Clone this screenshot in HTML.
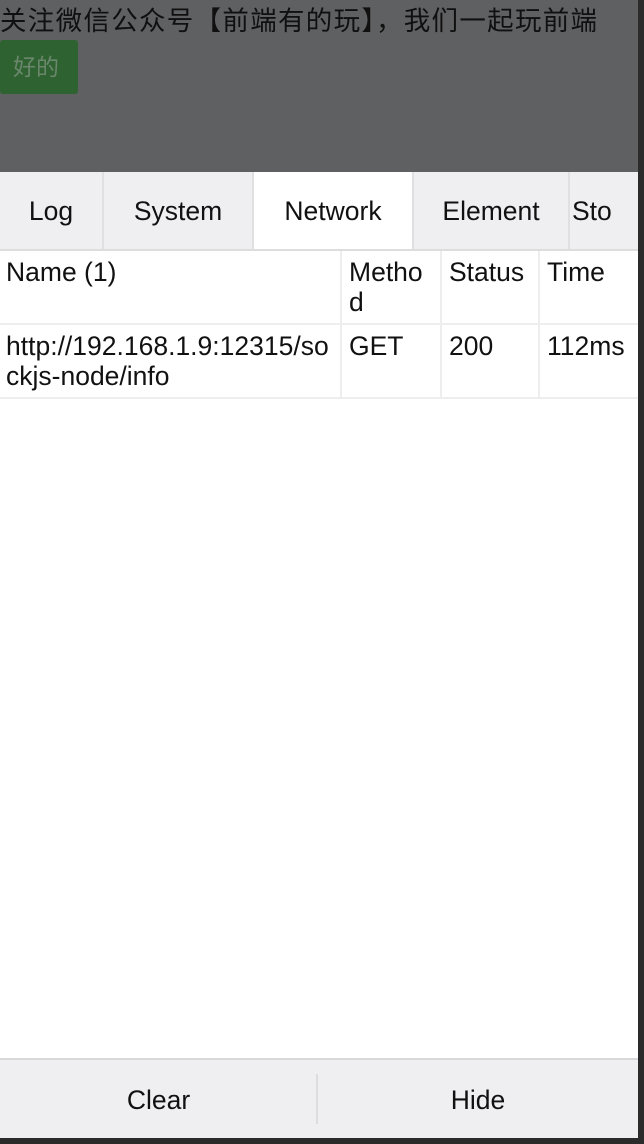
<!DOCTYPE html>
<html><head><meta charset="utf-8"><style>
*{margin:0;padding:0;box-sizing:border-box}
body{width:644px;height:1144px;background:#2b2b2b;position:relative;overflow:hidden;font-family:"Liberation Sans","Noto Sans CJK SC",sans-serif}
.top{position:absolute;left:0;top:0;width:638px;height:172px;background:#5f6062}
.msg{position:absolute;left:0;top:4px;font-size:26.5px;color:#101010;white-space:nowrap;line-height:34px;letter-spacing:1.3px}
.btn{position:absolute;left:0;top:40px;width:78px;height:54px;background:#2e6231;border-radius:3px;color:#6a876b;font-size:23px;line-height:54px;padding-left:13px}
.panel{position:absolute;left:0;top:172px;width:638px;height:966px;background:#fff}
.tabs{position:absolute;left:0;top:0;width:638px;height:79px;background:#efeff2;border-bottom:2px solid #ddd;overflow:hidden}
.tab{position:absolute;top:0;height:77px;line-height:78px;text-align:center;font-size:26.5px;color:#111;border-right:2px solid #e0e0e2;white-space:nowrap}
.tab.on{background:#fff}
.cell{position:absolute;font-size:26.5px;color:#111;line-height:30px;padding:6px 7px;border-right:2px solid #eee;border-bottom:2px solid #eee;white-space:nowrap}
.bar{position:absolute;left:0;top:886px;width:638px;height:80px;background:#efeff2;border-top:2px solid #d8d8da}
.bar div{position:absolute;top:0;height:78px;line-height:80px;text-align:center;font-size:26.5px;color:#111}
</style></head><body>
<div class="top"><div class="msg">关注微信公众号【前端有的玩】，我们一起玩前端</div><div class="btn">好的</div></div>
<div class="panel">
<div class="tabs">
<div class="tab" style="left:0;width:104px">Log</div>
<div class="tab" style="left:104px;width:150px">System</div>
<div class="tab on" style="left:254px;width:160px">Network</div>
<div class="tab" style="left:414px;width:156px">Element</div>
<div class="tab" style="left:570px;width:100px;text-align:left;padding-left:2px">Sto</div>
</div>
<div class="cell" style="left:0;top:79px;width:342px;height:74px;padding-left:6px">Name (1)</div>
<div class="cell" style="left:342px;top:79px;width:100px;height:74px">Metho<br>d</div>
<div class="cell" style="left:442px;top:79px;width:98px;height:74px">Status</div>
<div class="cell" style="left:540px;top:79px;width:98px;height:74px;border-right:none">Time</div>
<div class="cell" style="left:0;top:153px;width:342px;height:74px;padding-left:6px">http://192.168.1.9:12315/so<br>ckjs-node/info</div>
<div class="cell" style="left:342px;top:153px;width:100px;height:74px">GET</div>
<div class="cell" style="left:442px;top:153px;width:98px;height:74px">200</div>
<div class="cell" style="left:540px;top:153px;width:98px;height:74px;border-right:none">112ms</div>
<div class="bar"><div style="left:0;width:317px">Clear</div><div style="left:316px;top:14px;height:50px;width:2px;background:#ddd"></div><div style="left:318px;width:320px">Hide</div></div>
</div>
</body></html>
